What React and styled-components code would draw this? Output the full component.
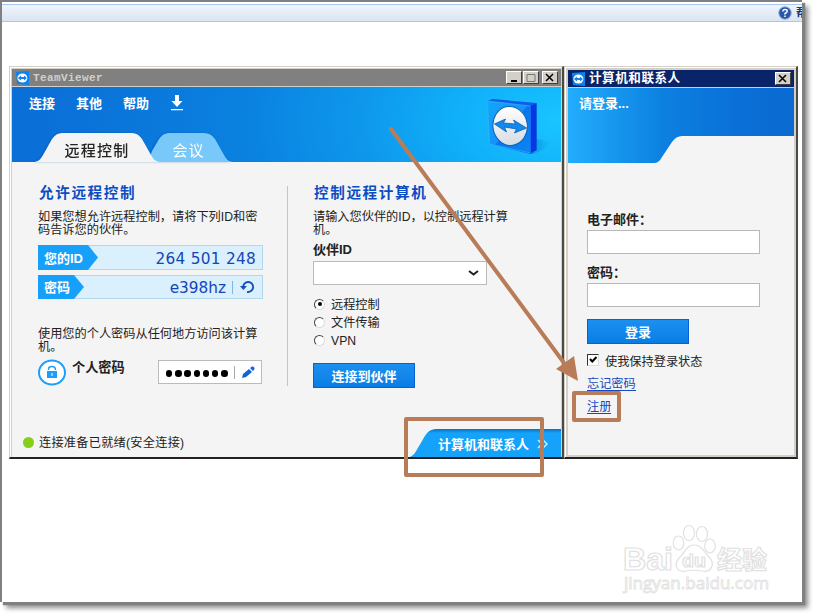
import React from 'react';
import styled, { createGlobalStyle } from 'styled-components';

const GlobalStyle = createGlobalStyle`
  * {
    box-sizing: border-box;
  }

  body {
    margin: 0;
    background: white;
    color: #222;
    font-family: 'Liberation Sans', 'Noto Sans CJK SC', sans-serif;
    font-size: 12.2px;
    line-height: 13px;
    white-space: nowrap;
  }

  h2, p {
    margin: 0;
  }
`;

const Canvas = styled.div`
  width: 813px;
  height: 613px;
  overflow: hidden;
  background: white;
`;

const Page = styled.div`
  position: relative;
  width: 802px;
  height: 602px;
  border-top: 2px solid #808080;
  border-left: 2px solid #808080;
  background: white;
  box-shadow: 3px 3px 1px #808080, 6px 6px 5px #8c8c8c;
`;

const TopBar = styled.div`
  display: flex;
  align-items: center;
  justify-content: flex-end;
  gap: 4px;
  height: 18px;
  margin-top: 2px;
  overflow: hidden;
  border-top: 1px solid #a9c8f0;
  border-bottom: 1px solid #a9c8f0;
  background: linear-gradient(#eff4fb, #dae5f2);
  color: #173a78;
  font-weight: bold;
`;

const HelpClip = styled.span`
  width: 6px;
  overflow: hidden;
`;

const Windows = styled.div`
  display: flex;
  padding: 44px 0 0 7px;
`;

const Window = styled.section`
  width: ${(props) => props.$width}px;
  height: 393px;
  padding: ${(props) => props.$padding};
  border-top: 1px solid #d4d0c8;
  border-left: 1px solid #d4d0c8;
  border-right: 2px solid #4a4a45;
  border-bottom: 2px solid #222;
  background: #d4d0c8;
  box-shadow: inset 1px 1px 0 white;
`;

const TitleBar = styled.div`
  display: flex;
  align-items: center;
  gap: 4px;
  height: 17px;
  padding: 0 3px 0 4px;
  background: ${(props) => props.$color};
  color: white;
  font-weight: bold;
  font-size: 12.6px;
  letter-spacing: 0.5px;
`;

const AppName = styled.span`
  color: #d4d0c8;
  font: bold 11px 'Liberation Mono', monospace;
  letter-spacing: 0.4px;
`;

const WindowButtons = styled.div`
  display: flex;
  gap: 1px;
  margin-left: auto;
`;

const WindowButton = styled.span`
  display: flex;
  width: 16px;
  height: 13px;
  margin-left: ${(props) => (props.$apart ? 2 : 0)}px;
  border: 1px solid;
  border-color: white #404040 #404040 white;
  background: #d4d0c8;
`;

const MainHeader = styled.header`
  display: flex;
  justify-content: space-between;
  height: 75px;
  margin-top: 1px;
  background: radial-gradient(
    ellipse 570px 330px at 100% 45%,
    #19c5ff 0%,
    #10b0fa 18%,
    #0e98ec 35%,
    #0a82e0 55%,
    #0a75da 78%,
    #0a6dd6 100%
  );
`;

const HeaderNav = styled.div`
  display: flex;
  flex-direction: column;
  justify-content: space-between;
`;

const Menu = styled.nav`
  display: flex;
  align-items: center;
  gap: 21px;
  height: 16px;
  margin: 8px 0 0 17px;
  color: white;
  font-size: 13px;
  font-weight: bold;
`;

const Tabs = styled.div`
  display: flex;
  height: 29px;
  padding-left: 21px;
  filter: drop-shadow(-1px 0 1px rgba(0, 60, 140, 0.35));
`;

const ActiveTab = styled.div`
  z-index: 1;
  width: 128px;
  height: 29px;
  padding-top: 3px;
  background: #f4f4f4;
  clip-path: path('M0 29 C5 29 7 27 10 22 L19 6 Q23 0 29 0 H99 Q105 0 109 6 L118 22 C121 27 123 29 128 29 Z');
  color: #222;
  font-size: 15px;
  font-weight: 500;
  letter-spacing: 1.2px;
  line-height: 30px;
  text-align: center;
`;

const MeetingTab = styled.div`
  width: 86px;
  height: 29px;
  margin-left: -13px;
  padding: 3px 5px 0 0;
  background: #78c8fa;
  clip-path: path('M0 29 L4 18 L11 6 Q15 0 21 0 H56 Q63 0 67 6 L76 22 C79 27 81 29 86 29 Z');
  color: white;
  font-size: 15px;
  letter-spacing: 1px;
  line-height: 30px;
  text-align: center;
`;

const MainBody = styled.div`
  display: flex;
  flex-direction: column;
  justify-content: space-between;
  height: 295px;
  background: #f4f4f4;
`;

const Columns = styled.div`
  display: flex;
  padding: 20px 0 0 26px;
`;

const Column = styled.div`
  display: flex;
  flex-direction: column;
  width: ${(props) => props.$width}px;
`;

const Divider = styled.div`
  width: 1px;
  height: 200px;
  margin: 4px 25px 0 24px;
  background: #c4c4c4;
`;

const Heading = styled.h2`
  height: 20px;
  color: #0a4cc4;
  font-size: 14.6px;
  font-weight: bold;
  letter-spacing: 1.6px;
  line-height: 22px;
  text-indent: 1px;
`;

const Description = styled.p`
  margin-top: ${(props) => props.$top}px;
`;

const Credential = styled.div`
  display: flex;
  align-items: center;
  height: ${(props) => props.$height}px;
  width: 225px;
  margin-top: ${(props) => props.$top}px;
  border: 1px solid #b0d8ea;
  background: #daf0fd;
  color: #1544b8;
`;

const CredentialLabel = styled.span`
  width: ${(props) => props.$width}px;
  height: ${(props) => props.$height}px;
  margin-left: -1px;
  padding: 1px 0 0 6px;
  background: #17a0fa;
  clip-path: polygon(0 0, calc(100% - 10px) 0, 100% 50%, calc(100% - 10px) 100%, 0 100%);
  color: white;
  font-size: 13px;
  font-weight: bold;
  line-height: ${(props) => props.$height}px;
`;

const CredentialValue = styled.span`
  margin-left: auto;
  padding: 2px 6px 0 0;
  font: 15.3px/22px 'DejaVu Sans', sans-serif;
  letter-spacing: ${(props) => props.$spacing || 0}px;
`;

const Separator = styled.span`
  width: 1px;
  height: 13px;
  margin-right: 7px;
  background: ${(props) => props.$color};
`;

const PersonalRow = styled.div`
  display: flex;
  height: 27px;
  margin-top: 5px;
`;

const PersonalLabel = styled.strong`
  width: 85px;
  padding: 2px 0 0 6px;
  font-size: 13.2px;
`;

const PersonalField = styled.div`
  display: flex;
  align-items: center;
  width: 104px;
  height: 24px;
  margin: 1px 1px 0 auto;
  padding-left: 7px;
  border: 1px solid #bbb;
  background: white;
`;

const Dots = styled.div`
  display: flex;
  gap: 2.8px;
  margin: 3px 6px 0 0;
`;

const Dot = styled.i`
  width: ${(props) => props.$size}px;
  height: ${(props) => props.$size}px;
  border-radius: 50%;
  background: ${(props) => props.$color};
`;

const FieldLabel = styled.strong`
  margin-top: ${(props) => props.$top}px;
  font-size: 13px;
  line-height: 14px;
`;

const Select = styled.div`
  display: flex;
  align-items: center;
  justify-content: flex-end;
  width: 174px;
  height: 24px;
  margin-top: 4px;
  padding-right: 7px;
  border: 1px solid #bbb;
  background: white;
`;

const Options = styled.div`
  display: flex;
  flex-direction: column;
  height: 50px;
  margin-top: 13px;
  justify-content: space-between;
`;

const Option = styled.label`
  display: flex;
  align-items: center;
  gap: 6px;
  height: 14px;
`;

const Radio = styled.span`
  display: flex;
  align-items: center;
  justify-content: center;
  width: 11px;
  height: 11px;
  margin: -2px 0 0 1px;
  border: 1px solid;
  border-color: #444 #ddd #ddd #444;
  border-radius: 50%;
  background: white;
`;

const Button = styled.button`
  width: 102px;
  height: 25px;
  margin: ${(props) => props.$top}px 0 0;
  padding: 0;
  border: 1px solid #0a5fd4;
  background: linear-gradient(#1b90f0, #0a7de4);
  color: white;
  font: bold 13px 'Liberation Sans', 'Noto Sans CJK SC', sans-serif;
`;

const Footer = styled.footer`
  display: flex;
  align-items: flex-end;
  justify-content: space-between;
  padding-left: 11px;
`;

const Status = styled.div`
  display: flex;
  align-items: center;
  gap: 5px;
  height: 30px;
  letter-spacing: 0.25px;
`;

const StatusText = styled.span`
  padding-top: 3px;
`;

const ContactsToggle = styled.div`
  display: flex;
  align-items: center;
  gap: 8px;
  width: 151px;
  height: 28px;
  padding: 2px 0 0 28px;
  background: linear-gradient(#0b70c0, #14a2fa 4px);
  clip-path: path('M0 28 C5 26 7 20 12 12 C16 5 18 0 27 0 H151 V28 Z');
  color: white;
  font-size: 13px;
  font-weight: bold;
`;

const LoginHeader = styled.header`
  height: 75px;
  padding: 9px 11px;
  background: linear-gradient(90deg, #22adfd, #0c80e0 42%, #0a70d8 75%, #0a6ad0);
  clip-path: path('M0 0 H226 V48 H114 Q108 48 104 54 L94 69 Q91 75 86 75 H0 Z');
  color: white;
  font-size: 13px;
  font-weight: bold;
`;

const LoginBody = styled.div`
  height: 368px;
  border-top: 1px solid #d4d0c8;
  background: #f4f4f4;
`;

const LoginForm = styled.div`
  display: flex;
  flex-direction: column;
  align-items: flex-start;
  padding: 50px 19px 0;
`;

const Input = styled.div`
  width: 173px;
  height: 24px;
  margin-top: 3px;
  border: 1px solid #b8b8b8;
  background: white;
`;

const Remember = styled.label`
  display: flex;
  gap: 6px;
  margin-top: 10px;
`;

const RememberText = styled.span`
  padding-top: 2px;
`;

const Checkbox = styled.span`
  display: flex;
  width: 12px;
  height: 12px;
  border: 1px solid;
  border-color: #333 #ddd #ddd #333;
  background: white;
`;

const Link = styled.a`
  margin-top: ${(props) => props.$top}px;
  border-bottom: 1px solid #1748c0;
  color: #1748c0;
  line-height: 12px;
`;

const Overlay = styled.svg`
  position: absolute;
  top: -2px;
  left: -2px;
`;

function Badge() {
  return (
    <svg width="13" height="14" viewBox="0 0 13 14">
      <path d="M0 1 L13 0 V14 L1 13 Z" fill="#0a83ee" />
      <ellipse cx="6.4" cy="7" rx="5" ry="4.6" fill="white" />
      <path d="M1.8 7 L5 4.5 V6 H8 V4.5 L11 7 L8 9.5 V8 H5 V9.5 Z" fill="#1685e8" />
    </svg>
  );
}

function CloseButton({ apart }) {
  return (
    <WindowButton $apart={apart}>
      <svg width="14" height="11">
        <path d="M3 2 L10 9 M10 2 L3 9" stroke="black" strokeWidth="1.5" />
      </svg>
    </WindowButton>
  );
}

function Logo() {
  return (
    <svg width="75" height="75" viewBox="486.5 87 75 75">
      <defs>
        <linearGradient id="face" x1="0" y1="0" x2="1" y2="1">
          <stop offset="0" stopColor="#12a8f8" />
          <stop offset="0.5" stopColor="#1593fa" />
          <stop offset="0.52" stopColor="#0876ee" />
          <stop offset="1" stopColor="#0a86f4" />
        </linearGradient>
        <linearGradient id="disc" x1="0" y1="0" x2="0" y2="1">
          <stop offset="0" stopColor="#ffffff" />
          <stop offset="1" stopColor="#d6dce4" />
        </linearGradient>
        <linearGradient id="shade">
          <stop offset="0" stopColor="#075c9d" stopOpacity="0.6" />
          <stop offset="1" stopColor="#0a90d8" stopOpacity="0" />
        </linearGradient>
      </defs>
      <path d="M528 153 L537 139 L552 142 Q546 150 533 154 Z" fill="url(#shade)" />
      <path d="M488 101 L493 99 L537 103 L537 150 L531 154 L491 144 Z" fill="#0d5cea" />
      <path d="M488 101 L531 106 L531 153 L490 144 Z" fill="url(#face)" stroke="#35b5fb" strokeWidth="0.7" />
      <path d="M531 106 L537 103 V150 L531 153 Z" fill="#0637e2" />
      <ellipse cx="510.5" cy="126" rx="17.2" ry="19.5" fill="url(#disc)" stroke="#0967bd" transform="rotate(-8 510 125)" />
      <path d="M495 124 L506 119 L504 123 L516 124 L514 120 L527 128 L515 133 L517 129 L505 127 L507 132 Z" fill="#1389ee" stroke="#0b60b5" strokeWidth="0.8" />
    </svg>
  );
}

function Watermark() {
  return (
    <g fill="white" stroke="#e1e1e1" strokeWidth="1.2" fontFamily="Liberation Sans, Noto Sans CJK SC, sans-serif" fontWeight="bold">
      <text x="623" y="570" fontSize="32" textLength="50" lengthAdjust="spacingAndGlyphs">Bai</text>
      <ellipse cx="678.5" cy="543" rx="5.3" ry="7" />
      <ellipse cx="689" cy="533" rx="5.5" ry="7.5" />
      <ellipse cx="702" cy="534" rx="5.5" ry="7.5" />
      <ellipse cx="710" cy="546" rx="5.3" ry="7" />
      <path d="M694 545 C702 545 703 551 709 557 C716 564 711 573 702 571 C696 570 691 570 686 571 C676 573 673 564 680 557 C686 551 687 545 694 545 Z" />
      <text x="682" y="567" fontSize="19" textLength="24" lengthAdjust="spacingAndGlyphs">du</text>
      <text x="717" y="569" fontSize="25" textLength="50">经验</text>
      <text x="624" y="589" fontFamily="Open Sans, sans-serif" fontSize="16" fontWeight="normal" strokeWidth="0.8" textLength="145" lengthAdjust="spacingAndGlyphs">jingyan.baidu.com</text>
    </g>
  );
}

function MainWindow() {
  return (
    <Window $width={555} $padding="2px 1px 0 2px">
      <TitleBar $color="#808080">
        <Badge />
        <AppName>TeamViewer</AppName>
        <WindowButtons>
          <WindowButton>
            <svg width="14" height="11"><path d="M4 9 H10" stroke="black" strokeWidth="2" /></svg>
          </WindowButton>
          <WindowButton>
            <svg width="14" height="11"><path d="M3 2.5 H11 V9.5 H3 Z" fill="none" stroke="#777" /></svg>
          </WindowButton>
          <CloseButton apart />
        </WindowButtons>
      </TitleBar>
      <MainHeader>
        <HeaderNav>
          <Menu>
            <span>连接</span>
            <span>其他</span>
            <span>帮助</span>
            <svg width="14" height="16" viewBox="0 0 14 16" fill="white">
              <path d="M5 0 H9 V6 H12.5 L7 12 L1.5 6 H5 Z M1 14 H13 V15.3 H1 Z" />
            </svg>
          </Menu>
          <Tabs>
            <ActiveTab>远程控制</ActiveTab>
            <MeetingTab>会议</MeetingTab>
          </Tabs>
        </HeaderNav>
        <Logo />
      </MainHeader>
      <MainBody>
        <Columns>
          <Column $width={225}>
            <Heading>允许远程控制</Heading>
            <Description $top={9}>
              如果您想允许远程控制，请将下列ID和密
              <br />
              码告诉您的伙伴。
            </Description>
            <Credential $top={8} $height={25}>
              <CredentialLabel $width={60} $height={25}>您的ID</CredentialLabel>
              <CredentialValue $spacing={0.3}>264 501 248</CredentialValue>
            </Credential>
            <Credential $top={5} $height={24}>
              <CredentialLabel $width={46} $height={24}>密码</CredentialLabel>
              <CredentialValue>e398hz</CredentialValue>
              <Separator $color="#7fb6e8" />
              <svg width="22" height="14" viewBox="0 0 22 14">
                <path d="M3.2 7.5 A5 5 0 1 1 7 11.8" fill="none" stroke="#1650b8" strokeWidth="1.9" />
                <path d="M0 6 H7 L3.3 10 Z" fill="#1650b8" />
              </svg>
            </Credential>
            <Description $top={29}>
              使用您的个人密码从任何地方访问该计算
              <br />
              机。
            </Description>
            <PersonalRow>
              <svg width="28" height="27" viewBox="0 0 28 27">
                <ellipse cx="14" cy="13.5" rx="13" ry="12" fill="white" stroke="#1c9ffa" strokeWidth="2" />
                <path d="M10.5 11 V10 Q10.5 7.5 14 7.5 Q17.5 7.5 17.5 11" fill="none" stroke="#1c9ffa" strokeWidth="1.4" />
                <path d="M9 12 H19 V19 H9 Z" fill="#1c9ffa" />
                <path d="M13.5 14 H14.5 V17 H13.5 Z" fill="white" />
              </svg>
              <PersonalLabel>个人密码</PersonalLabel>
              <PersonalField>
                <Dots>
                  {[0, 1, 2, 3, 4, 5, 6].map((dot) => (
                    <Dot key={dot} $size={6.4} $color="black" />
                  ))}
                </Dots>
                <Separator $color="#aaa" />
                <svg width="13" height="12" viewBox="0 0 13 12" fill="#1462d8">
                  <path d="M0 12 L1 8 L7 3 L10 6 L4 11 Z M8 2 L10 0.5 Q12 0 12.5 2 Q13 3 11 5 Z" />
                </svg>
              </PersonalField>
            </PersonalRow>
          </Column>
          <Divider />
          <Column $width={200}>
            <Heading>控制远程计算机</Heading>
            <Description $top={9}>
              请输入您伙伴的ID，以控制远程计算
              <br />
              机。
            </Description>
            <FieldLabel $top={6}>伙伴ID</FieldLabel>
            <Select>
              <svg width="11" height="8">
                <path d="M1 2 L5.5 5.5 L10 2" fill="none" stroke="#222" strokeWidth="2" />
              </svg>
            </Select>
            <Options>
              <Option>
                <Radio><Dot $size={4} $color="black" /></Radio>
                远程控制
              </Option>
              <Option><Radio />文件传输</Option>
              <Option><Radio />VPN</Option>
            </Options>
            <Button $top={15}>连接到伙伴</Button>
          </Column>
        </Columns>
        <Footer>
          <Status>
            <Dot $size={11} $color="#84cf18" />
            <StatusText>连接准备已就绪(安全连接)</StatusText>
          </Status>
          <ContactsToggle>
            计算机和联系人
            <svg width="12" height="10">
              <path d="M1 1 L5 5 L1 9 M6 1 L10 5 L6 9" fill="none" stroke="#cdeeff" strokeWidth="1.5" />
            </svg>
          </ContactsToggle>
        </Footer>
      </MainBody>
    </Window>
  );
}

function ContactsWindow() {
  return (
    <Window $width={234} $padding="3px 2px 2px 3px">
      <TitleBar $color="#0a246a">
        <Badge />
        计算机和联系人
        <WindowButtons>
          <CloseButton />
        </WindowButtons>
      </TitleBar>
      <LoginBody>
        <LoginHeader>请登录...</LoginHeader>
        <LoginForm>
          <FieldLabel $top={0}>电子邮件：</FieldLabel>
          <Input />
          <FieldLabel $top={12}>密码：</FieldLabel>
          <Input />
          <Button $top={12}>登录</Button>
          <Remember>
            <Checkbox>
              <svg width="10" height="10">
                <path d="M2 4 L4.3 6.5 L8.5 2" fill="none" stroke="black" strokeWidth="2" />
              </svg>
            </Checkbox>
            <RememberText>使我保持登录状态</RememberText>
          </Remember>
          <Link $top={9}>忘记密码</Link>
          <Link $top={10}>注册</Link>
        </LoginForm>
      </LoginBody>
    </Window>
  );
}

export default function App() {
  return (
    <Canvas>
      <GlobalStyle />
      <Page>
        <TopBar>
          <svg width="14" height="14" viewBox="0 0 14 14">
            <circle cx="7" cy="7" r="6.2" fill="#2a57ad" stroke="#8da6d2" />
            <path d="M4.8 5.5 Q5 3.5 7 3.5 Q9.3 3.5 9.2 5.3 Q9 6.5 7 7.5 V8.5 M7 9.5 V11" fill="none" stroke="white" strokeWidth="1.5" />
          </svg>
          <HelpClip>帮助</HelpClip>
        </TopBar>
        <Windows>
          <MainWindow />
          <ContactsWindow />
        </Windows>
        <Overlay width="802" height="602">
          <Watermark />
          <g fill="none" stroke="#b97c58" strokeWidth="4" strokeLinejoin="round" strokeLinecap="round">
            <path d="M391 129 L567 367" />
            <rect x="406" y="419" width="136" height="56" />
            <rect x="574" y="393" width="45" height="27" />
          </g>
          <path d="M556 369 L574 356 L578 381 Z" fill="#b97c58" />
        </Overlay>
      </Page>
    </Canvas>
  );
}
